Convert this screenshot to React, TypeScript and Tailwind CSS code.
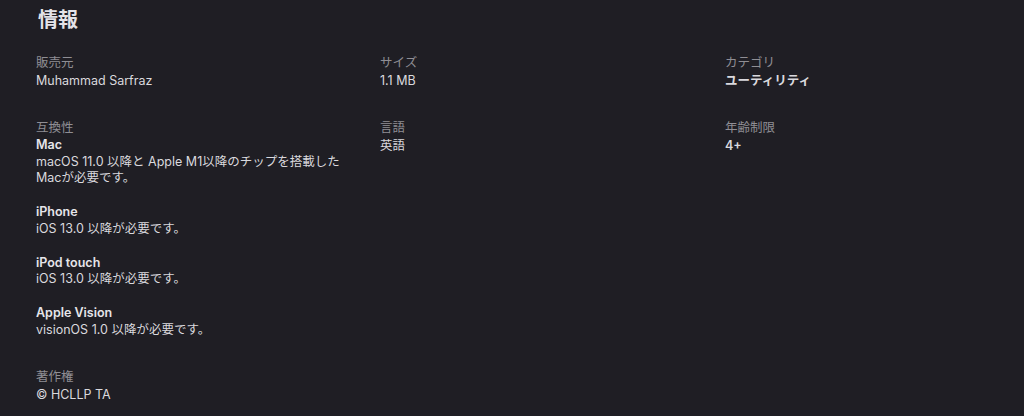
import React from 'react';

const font = { fontFamily: 'Inter, "Noto Sans CJK JP", sans-serif' };

const Field: React.FC<{ label: string; children: React.ReactNode }> = ({ label, children }) => (
  <div className="text-[12.5px] leading-[17px]">
    <div className="text-[#8f8e94]">{label}</div>
    <div className="mt-[1px] text-[#dad9de]">{children}</div>
  </div>
);

const Device: React.FC<{ name: string; lines: string[] }> = ({ name, lines }) => (
  <div className="leading-[16.5px]">
    <div className="font-semibold text-[#e6e5ea]">{name}</div>
    {lines.map(l => (
      <div key={l}>{l}</div>
    ))}
  </div>
);

export default function App() {
  return (
    <div className="w-[1024px] h-[416px] overflow-hidden bg-[#1f1e24] pl-[36px] pt-[8px]" style={font}>
      <h2 className="pl-[2px] text-[20px] leading-[24px] font-bold text-[#e4e3e8]">情報</h2>
      <div className="mt-[22px] grid grid-cols-[344px_345px_1fr] gap-y-[30px]">
        <Field label="販売元">Muhammad Sarfraz</Field>
        <Field label="サイズ">1.1 MB</Field>
        <Field label="カテゴリ">
          <span className="font-semibold">ユーティリティ</span>
        </Field>

        <Field label="互換性">
          <div className="flex flex-col gap-[17.5px]">
            <Device name="Mac" lines={['macOS 11.0 以降と Apple M1以降のチップを搭載した', 'Macが必要です。']} />
            <Device name="iPhone" lines={['iOS 13.0 以降が必要です。']} />
            <Device name="iPod touch" lines={['iOS 13.0 以降が必要です。']} />
            <Device name="Apple Vision" lines={['visionOS 1.0 以降が必要です。']} />
          </div>
        </Field>
        <Field label="言語">英語</Field>
        <Field label="年齢制限">
          <span className="font-semibold">4+</span>
        </Field>
      </div>
      <div className="mt-[30px]">
        <Field label="著作権">© HCLLP TA</Field>
      </div>
    </div>
  );
}
